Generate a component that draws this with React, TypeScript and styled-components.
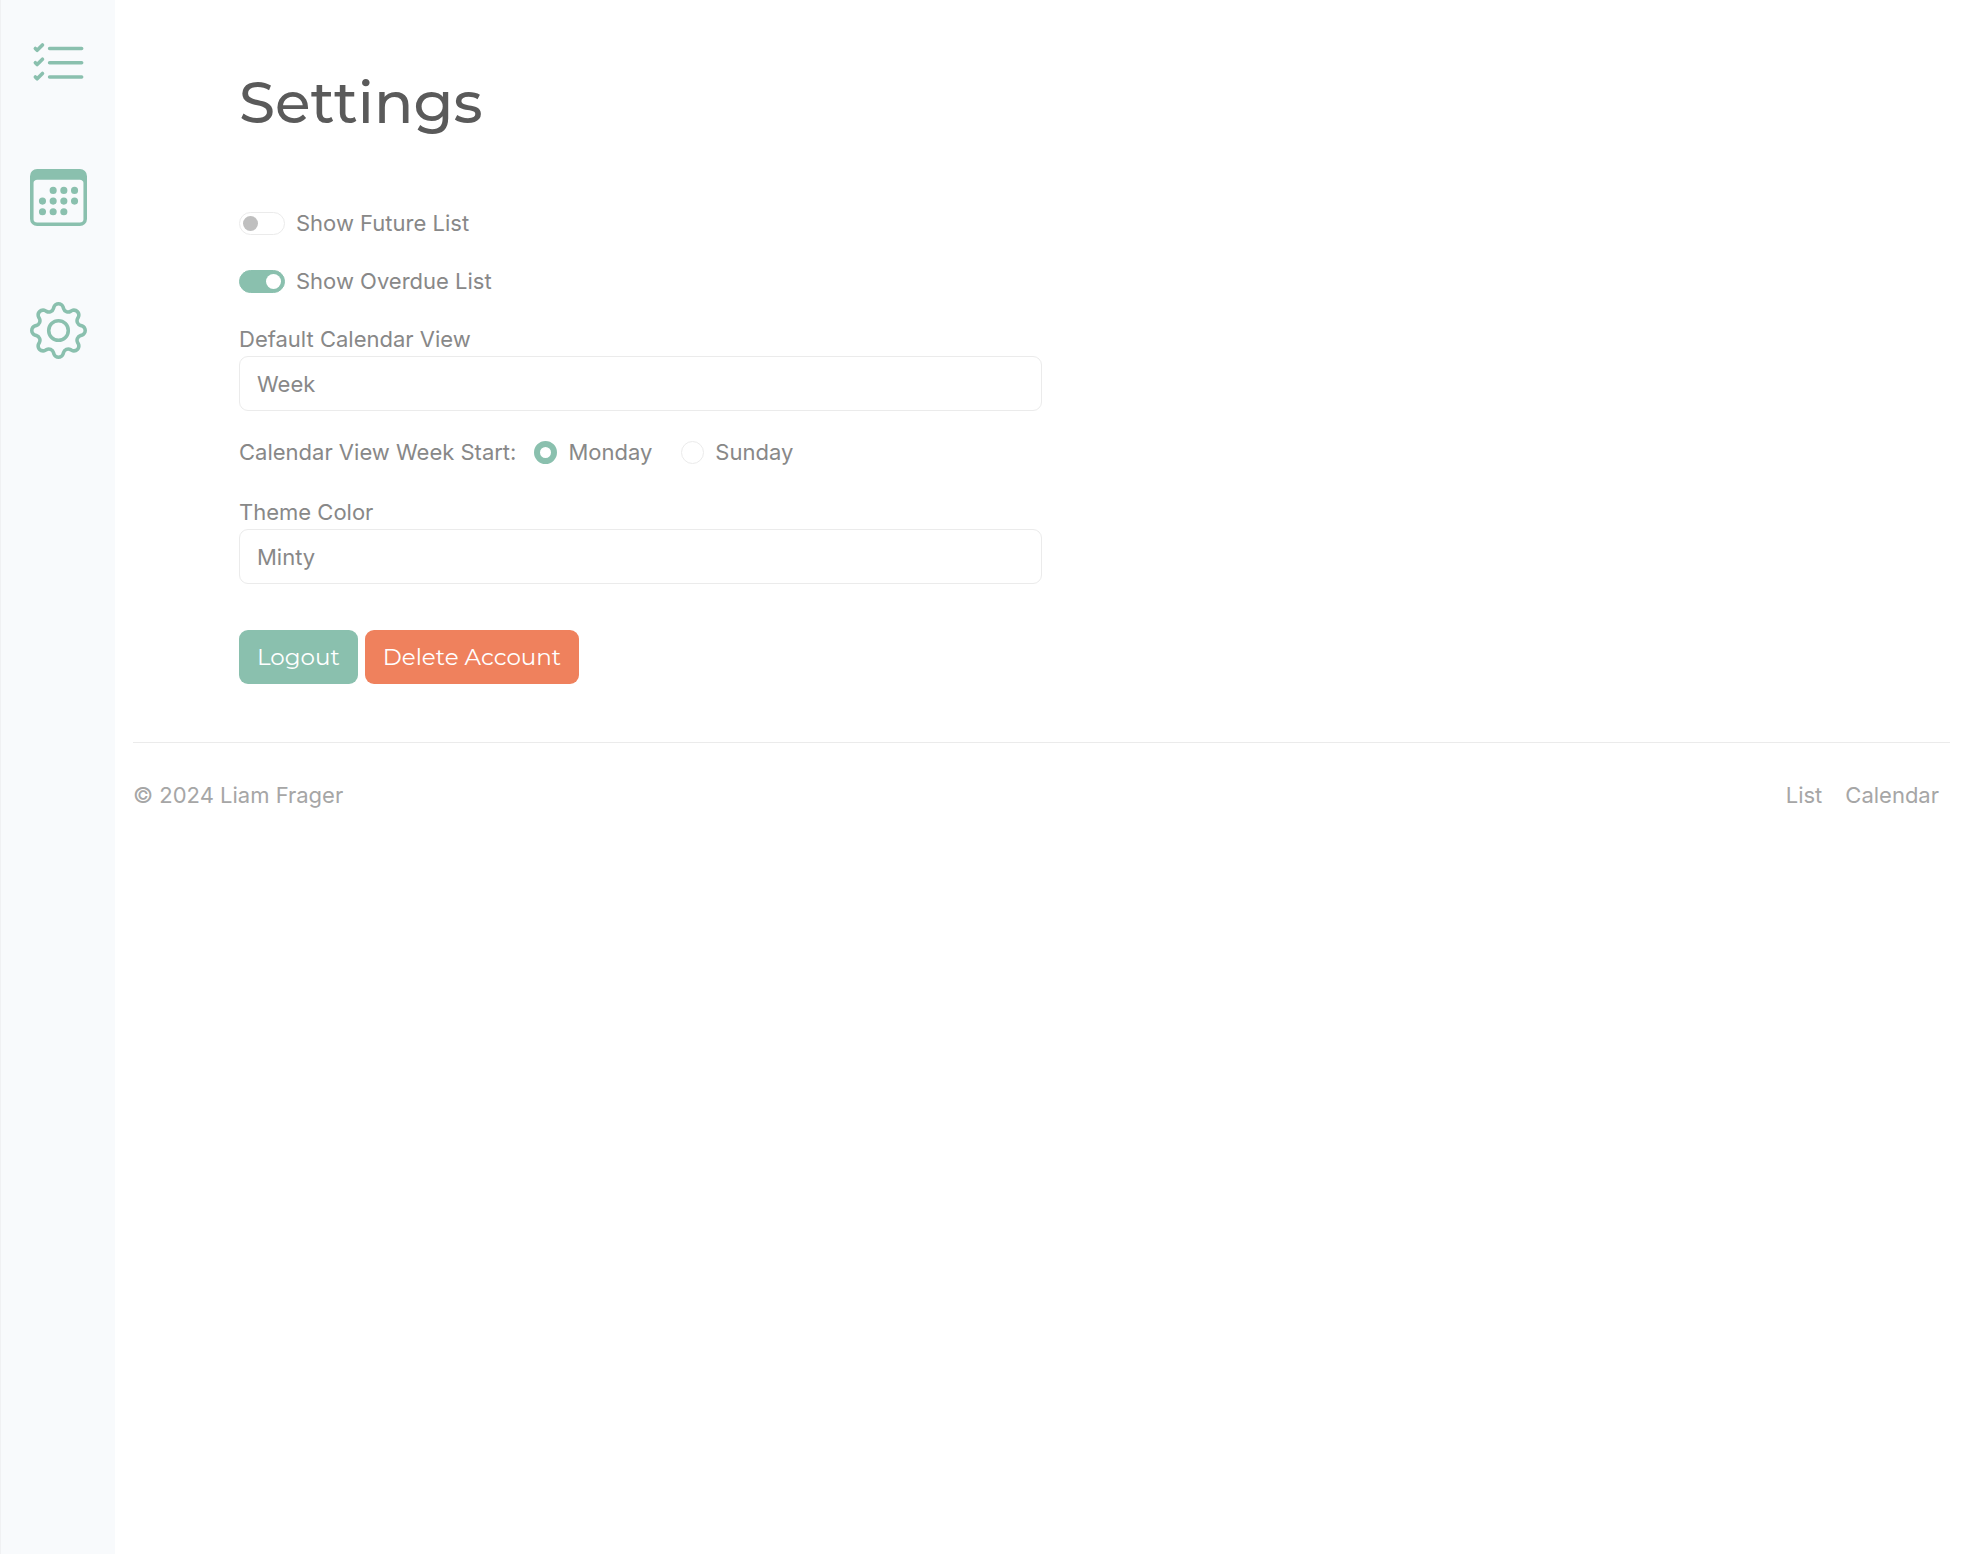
import React, { useState } from "react";
import styled, { createGlobalStyle } from "styled-components";
import { BsCalendar3, BsGear, BsListCheck } from "react-icons/bs";

const mint = "#8ac0ae";
const coral = "#ef815d";
const line = "#ebebeb";
const bodyFont = 'Inter, "Liberation Sans", sans-serif';
const displayFont = 'Montserrat, Inter, "Liberation Sans", sans-serif';

const GlobalStyle = createGlobalStyle`
  *, *::before, *::after { box-sizing: border-box; }
  body {
    margin: 0;
    background: #ffffff;
    color: #888888;
    font-family: ${bodyFont};
    font-size: 22px;
    line-height: 34px;
  }
`;

const Page = styled.div`
  display: flex;
  min-height: 100vh;
`;

const Sidebar = styled.nav`
  flex: 0 0 115px;
  display: flex;
  flex-direction: column;
  align-items: center;
  gap: 76px;
  padding-top: 36px;
  background: #f8fafc;
  border-left: 1px solid #f0f1f3;
`;

const NavLink = styled.a`
  display: flex;
  color: ${mint};
  font-size: 57px;
`;

const Main = styled.div`
  flex: 1;
  min-width: 0;
  padding: 0 18px;
`;

const Content = styled.main`
  padding: 69px 106px 58px;
`;

const Title = styled.h1`
  margin: 0 0 69px;
  color: #5a5a5a;
  font-family: ${displayFont};
  font-size: 58px;
  font-weight: 500;
  line-height: 68px;
`;

const Form = styled.form`
  width: 50%;
`;

const SwitchRow = styled.div`
  display: flex;
  align-items: center;
  gap: 11px;
  margin-bottom: 24px;
`;

const Switch = styled.input`
  appearance: none;
  display: flex;
  align-items: center;
  width: 46px;
  height: 23px;
  margin: 0;
  padding: 0 3px;
  border: 1px solid ${line};
  border-radius: 12px;
  background: #ffffff;

  &::before {
    content: "";
    width: 15px;
    height: 15px;
    border-radius: 50%;
    background: #bfbfbf;
  }

  &:checked {
    justify-content: flex-end;
    border-color: ${mint};
    background: ${mint};
  }

  &:checked::before {
    background: #ffffff;
  }
`;

const Field = styled.div`
  display: flex;
  flex-direction: column;
`;

const Select = styled.select`
  appearance: none;
  width: 100%;
  height: 55px;
  padding: 0 17px;
  border: 1px solid ${line};
  border-radius: 9px;
  background: #ffffff;
  color: #888888;
  font: inherit;
`;

const RadioRow = styled.fieldset`
  display: flex;
  align-items: center;
  gap: 29px;
  margin: 24px 0 26px;
  padding: 0;
  border: 0;
`;

const RadioTitle = styled.legend`
  float: left;
  padding: 0;
  margin-right: -11px;
`;

const RadioOption = styled.div`
  display: flex;
  align-items: center;
  gap: 11px;
`;

const Radio = styled.input`
  appearance: none;
  width: 23px;
  height: 23px;
  margin: 0;
  border: 1px solid ${line};
  border-radius: 50%;
  background: #ffffff;

  &:checked {
    border: 6px solid ${mint};
  }
`;

const Actions = styled.div`
  display: flex;
  gap: 7px;
  margin-top: 46px;
`;

const Button = styled.button<{ $tone: string }>`
  height: 54px;
  padding: 0 18px;
  border: 0;
  border-radius: 9px;
  background: ${({ $tone }) => $tone};
  color: #ffffff;
  font-family: ${displayFont};
  font-size: 23px;
  line-height: 34px;
`;

const Footer = styled.footer`
  display: flex;
  justify-content: space-between;
  padding: 35px 11px 35px 0;
  border-top: 1px solid ${line};
  color: #a6a6a6;
`;

const FooterLinks = styled.div`
  display: flex;
  gap: 23px;
`;

const FooterLink = styled.a`
  color: inherit;
  text-decoration: none;
`;

export default function App() {
  const [showFuture, setShowFuture] = useState(false);
  const [showOverdue, setShowOverdue] = useState(true);
  const [weekStart, setWeekStart] = useState("monday");

  return (
    <>
      <GlobalStyle />
      <Page>
        <Sidebar>
          <NavLink href="#list" aria-label="List"><BsListCheck /></NavLink>
          <NavLink href="#calendar" aria-label="Calendar"><BsCalendar3 /></NavLink>
          <NavLink href="#settings" aria-label="Settings"><BsGear /></NavLink>
        </Sidebar>
        <Main>
          <Content>
            <Title>Settings</Title>
            <Form onSubmit={(e) => e.preventDefault()}>
              <SwitchRow>
                <Switch
                  id="future"
                  type="checkbox"
                  checked={showFuture}
                  onChange={(e) => setShowFuture(e.target.checked)}
                />
                <label htmlFor="future">Show Future List</label>
              </SwitchRow>
              <SwitchRow>
                <Switch
                  id="overdue"
                  type="checkbox"
                  checked={showOverdue}
                  onChange={(e) => setShowOverdue(e.target.checked)}
                />
                <label htmlFor="overdue">Show Overdue List</label>
              </SwitchRow>
              <Field>
                <label htmlFor="view">Default Calendar View</label>
                <Select id="view" defaultValue="Week">
                  <option>Week</option>
                  <option>Month</option>
                </Select>
              </Field>
              <RadioRow>
                <RadioTitle>Calendar View Week Start:</RadioTitle>
                <RadioOption>
                  <Radio
                    id="monday"
                    type="radio"
                    name="week-start"
                    checked={weekStart === "monday"}
                    onChange={() => setWeekStart("monday")}
                  />
                  <label htmlFor="monday">Monday</label>
                </RadioOption>
                <RadioOption>
                  <Radio
                    id="sunday"
                    type="radio"
                    name="week-start"
                    checked={weekStart === "sunday"}
                    onChange={() => setWeekStart("sunday")}
                  />
                  <label htmlFor="sunday">Sunday</label>
                </RadioOption>
              </RadioRow>
              <Field>
                <label htmlFor="theme">Theme Color</label>
                <Select id="theme" defaultValue="Minty">
                  <option>Minty</option>
                </Select>
              </Field>
              <Actions>
                <Button type="button" $tone={mint}>Logout</Button>
                <Button type="button" $tone={coral}>Delete Account</Button>
              </Actions>
            </Form>
          </Content>
          <Footer>
            <span>© 2024 Liam Frager</span>
            <FooterLinks>
              <FooterLink href="#list">List</FooterLink>
              <FooterLink href="#calendar">Calendar</FooterLink>
            </FooterLinks>
          </Footer>
        </Main>
      </Page>
    </>
  );
}
